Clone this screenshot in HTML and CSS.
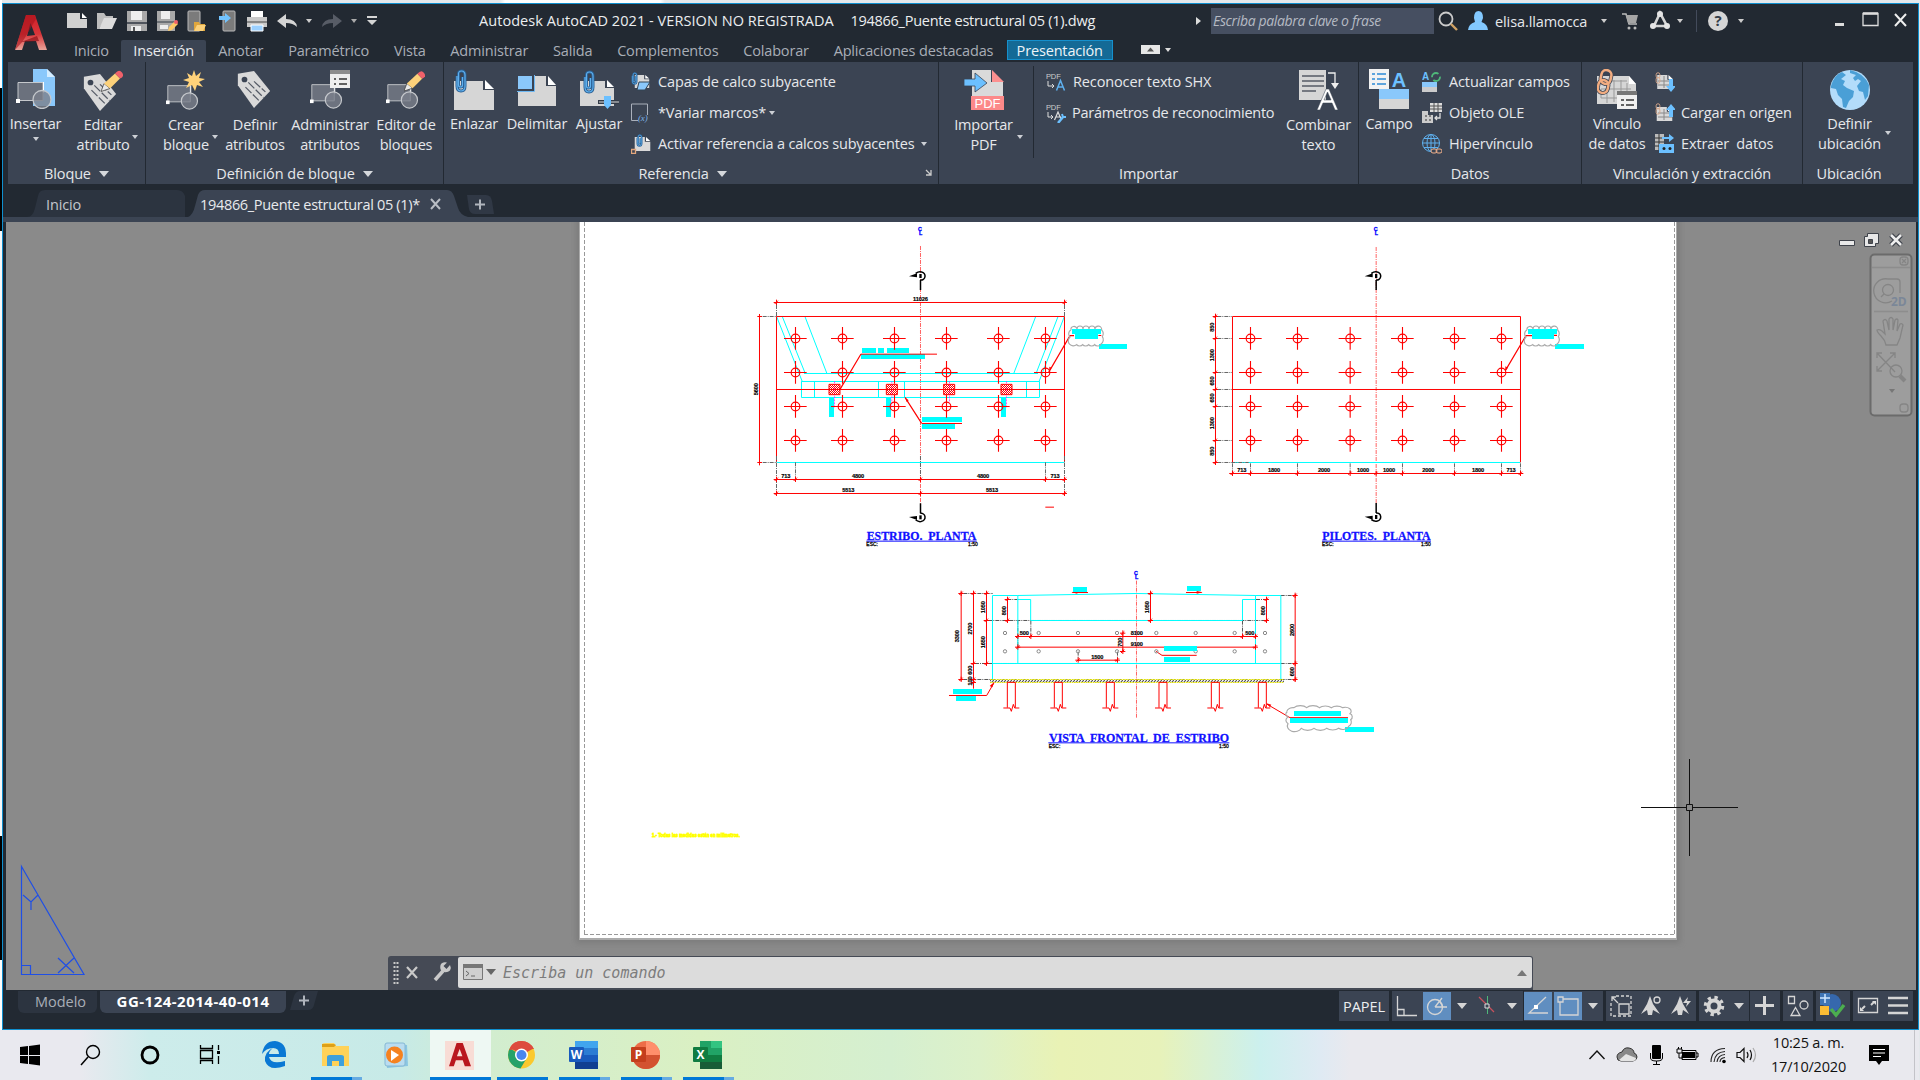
FILE: index.html
```html
<!DOCTYPE html>
<html lang="es">
<head>
<meta charset="utf-8">
<title>Autodesk AutoCAD 2021</title>
<link rel="stylesheet" href="styles.css">
</head>
<body>
<svg class="defs" width="0" height="0" aria-hidden="true">
  <defs>
    <linearGradient id="redA" x1="0" y1="0" x2="0" y2="1"><stop offset="0" stop-color="#d0202a"/><stop offset=".55" stop-color="#d8363a"/><stop offset="1" stop-color="#e9a49a"/></linearGradient>
    <symbol id="logoA" viewBox="0 0 32 36"><path d="M11 0h9l12 35h-8l-3-9H10l-3 9H0z" fill="url(#redA)"/><path d="M15.500 8l4.500 12-8 1z" fill="#222932"/><path d="M11 0h9l1 4L8 26 0 35z" fill="#a8141d" opacity=".6"/><path d="M6 27l16-6 2 5z" fill="#8e0f18" opacity=".7"/></symbol>
    <symbol id="blk" viewBox="0 0 40 40"><path d="M2 13.500h25v18H2z" fill="#6b717d" stroke="#c5c8cc"/><path d="M27.500 13v11" stroke="#fff"/><circle cx="26" cy="30.500" r="9" fill="#7b808b" fill-opacity=".8" stroke="#c5c8cc" stroke-width="1.300"/><path d="M0 30h4v4H0z" fill="#fff"/></symbol>
    <symbol id="tag" viewBox="0 0 40 40"><path d="M3 4L20 1l17 21-17 18L3 16z" fill="#d9d9d9"/><circle cx="10" cy="10" r="3" fill="#3b4453"/><path d="M11 18l14 14M14 13l16 16M20 12l12 11" stroke="#555b66" stroke-width="1.300" stroke-dasharray="9 2"/></symbol>
    <symbol id="pencil" viewBox="0 0 22 22"><path d="M0 21l3-8 6 5z" fill="#e9e9e9" stroke="#333" stroke-width=".7"/><path d="M3 13L14 3l5 5L9 18z" fill="#fcd17a"/><path d="M14 3q4-5 7-1t-2 6z" fill="#f0616a"/></symbol>
    <symbol id="clip" viewBox="0 0 12 24"><path d="M2 7v10q0 5 4 5t4-5V6q0-4-3.500-4T3.500 6v10q0 2 2 2t2-2V8" fill="none" stroke="#2a5f92" stroke-width="3"/><path d="M2 7v10q0 5 4 5t4-5V6q0-4-3.500-4T3.500 6v10q0 2 2 2t2-2V8" fill="none" stroke="#5fb0ee" stroke-width="1.200"/></symbol>
    <symbol id="sheet" viewBox="0 0 20 18"><path d="M0 0h13v6h7v12H0z" fill="#d9d9d9"/><path d="M14.500 0L20 5h-5.500z" fill="#fff"/></symbol>
    <symbol id="link" viewBox="0 0 7 16"><rect x="1" y="1" width="5" height="7" rx="2.500" fill="none" stroke="#d9a98b" stroke-width="1.200"/><rect x="1" y="7" width="5" height="8" rx="2.500" fill="none" stroke="#d9a98b" stroke-width="1.200"/></symbol>
    <g id="pile" stroke="#f00" stroke-width="3.300" fill="none"><path d="M-34 .5h68M.5-34v68"/><circle cx=".5" cy=".5" r="13"/></g>
    <g id="pilerow"><use href="#pile" y="355"/><use href="#pile" y="457"/><use href="#pile" y="559"/><use href="#pile" y="661"/></g>
    <g id="tick"><path d="M-8 .5h16M.5-8v16M-5 5l10-10" stroke="#f00" stroke-width="3"/></g>
    <g id="sectop"><path d="M-34 1l24-9v12z" fill="#000"/><path d="M-14-8Q-4-15 4-12A12 12 0 0 1 0 12" fill="none" stroke="#000" stroke-width="4.500"/><path d="M-3-6h7V6h-7z"/><path d="M.5 12v30" stroke="#000" stroke-width="4.500"/></g>
    <g id="cloud" fill="none" stroke="#aaa" stroke-width="3.500"><path d="M5 10a9 9 0 0 1 18-3a9 9 0 0 1 18 0a9 9 0 0 1 18 0a9 9 0 0 1 18 0a9 9 0 0 1 20 3a10 14 0 0 1 2 20a12 14 0 0 1-4 22a10 7 0 0 1-19 2a10 7 0 0 1-18 0a10 7 0 0 1-18 0a10 7 0 0 1-18 0a13 13 0 0 1-20-23a10 12 0 0 1 3-21"/></g>
    <g id="stub" fill="none" stroke="#f00" stroke-width="3"><path d="M-12 76V0h24v76M-24 77H-4l4 10L6 66l4 11h14"/></g>
    <g id="cline"><text y="-9">C</text><text x="2" y="3">L</text></g>
    <pattern id="hatch" width="6" height="6" patternUnits="userSpaceOnUse"><path d="M0 6L6 0" stroke="#f00" stroke-width="3"/></pattern>
    <pattern id="ground" width="9" height="9" patternUnits="userSpaceOnUse"><path d="M0 9L9 0" stroke="#555" stroke-width="3.500"/></pattern>
  </defs>
</svg>

<div class="screen">
<div class="window">
  <header class="titlebar">
    <svg class="logo" width="32" height="36"><use href="#logoA"/></svg>
    <div class="qat">
      <svg width="330" height="28" viewBox="62 7 330 28">
        <path d="M67 13h13v6h7v9H67z" fill="#d0d0d0"/><path d="M82 13l5 5h-5z" fill="#fff"/>
        <path d="M97 13h7l2 3h7v3h-8l-6 10h-2z" fill="#bdbdbd"/><path d="M104 18h13l-5 11H99z" fill="#dcdcdc"/>
        <path d="M127 11h20v20h-20z" fill="#a9a9a9"/><path d="M131 11h11v9h-11z" fill="#eee"/><path d="M127 23h20" stroke="#333a44" stroke-width="1.500"/><path d="M131 26h10v5h-10z" fill="#eee"/><path d="M134 27v4" stroke="#222" stroke-width="1.500"/>
        <path d="M157 11h18v20h-18z" fill="#a9a9a9"/><path d="M161 11h9v8h-9z" fill="#eee"/><path d="M157 22h18" stroke="#333a44"/><path d="M160 25h8v4h-8z" fill="#eee"/><path d="M168 31l1-4 6-6 3 3-6 6z" fill="#fcc967"/><circle cx="176" cy="22" r="2" fill="#f0616a"/>
        <rect x="188" y="11" width="12" height="20" rx="1" fill="#7b7b7b" stroke="#b9b9b9"/><path d="M194 22h5l1 2h5v7h-11z" fill="#e0a63c"/><path d="M197 25h9l-3 6h-9z" fill="#fcd17a"/>
        <rect x="223" y="11" width="12" height="20" rx="1" fill="#7b7b7b" stroke="#b9b9b9"/><path d="M219 16h6v-3l6 5-6 5v-3h-6z" fill="#72c3ff"/>
        <path d="M251 11h12v6h-12z" fill="#fff"/><path d="M247 17h20v10h-20z" fill="#c9c9c9"/><path d="M247 22h20" stroke="#444"/><path d="M251 25h12v6h-12z" fill="#9bd0ff" stroke="#fff"/>
        <path d="M277 21l9-7v5q10 0 11 8q-4-4-11-4v5z" fill="#d5d5d5"/><path d="M306 19h6l-3 4z" fill="#ccc"/>
        <path d="M342 21l-9-7v5q-10 0-11 8q4-4 11-4v5z" fill="#575c66"/><path d="M351 19h6l-3 4z" fill="#aaa"/>
        <path d="M367 16h10v2h-10zM367 20h10l-5 5z" fill="#d5d5d5"/>
      </svg>
    </div>
    <div class="title"><span class="t1">Autodesk AutoCAD 2021 - VERSION NO REGISTRADA</span><span class="t2">194866_Puente estructural 05 (1).dwg</span></div>
    <svg class="tri" width="5" height="8"><path d="M0 0l5 4-5 4z" fill="#ddd"/></svg>
    <div class="search">Escriba palabra clave o frase</div>
    <svg class="acct" width="56" height="28" viewBox="1436 7 56 28"><circle cx="1446" cy="19" r="6.500" fill="none" stroke="#ccc" stroke-width="1.800"/><path d="M1451 24l6 6" stroke="#d0a264" stroke-width="2.400"/><path d="M1474 18q0-7 4.500-7t4.500 7l-1.500 4q6 2 6.500 8h-20q.5-6 7-8z" fill="#83c9ff"/></svg>
    <div class="user">elisa.llamocca</div>
    <svg width="320" height="34" viewBox="1595 4 320 34">
      <path d="M1601 19h6l-3 4zM1677 19h6l-3 4zM1738 19h6l-3 4z" fill="#ccc"/>
      <path d="M1622 14h4l3 10h8" fill="none" stroke="#bbb" stroke-width="1.500"/><path d="M1626 15h12l-2 8h-8z" fill="#a5a5a5"/><circle cx="1629" cy="28" r="1.500" fill="#bbb"/><circle cx="1635" cy="28" r="1.500" fill="#bbb"/>
      <path d="M1660 13l-6 13h13z" fill="none" stroke="#d5d5d5" stroke-width="2.600"/><circle cx="1660" cy="14" r="3" fill="#e5e5e5"/><circle cx="1653" cy="26" r="3" fill="#e5e5e5"/><circle cx="1667" cy="26" r="3" fill="#e5e5e5"/>
      <path d="M1696.500 10v22" stroke="#434b5b"/>
      <circle cx="1718" cy="21" r="10" fill="#d5d5d5"/><text x="1718" y="26" text-anchor="middle" class="qm">?</text>
      <path d="M1835 23h9v3h-9z" fill="#ddd"/><path d="M1863 13.500h15v12h-15z" fill="none" stroke="#ddd" stroke-width="1.300"/><path d="M1863 13.500h15" stroke="#ddd" stroke-width="2.500"/><path d="M1895 14l11 12M1906 14l-11 12" stroke="#eee" stroke-width="2"/>
    </svg>
  </header>

  <nav class="tabs">
    <span class="tab">Inicio</span><span class="tab on">Inserción</span><span class="tab">Anotar</span><span class="tab">Paramétrico</span><span class="tab">Vista</span><span class="tab">Administrar</span><span class="tab">Salida</span><span class="tab">Complementos</span><span class="tab">Colaborar</span><span class="tab">Aplicaciones destacadas</span><span class="tab ctx">Presentación</span>
    <svg class="minrib" width="32" height="10"><path d="M0 0h19v9H0z" fill="#e6e6e6"/><path d="M6 6.500h7l-3.500-4z" fill="#555"/><path d="M24 3h6l-3 4z" fill="#ddd"/></svg>
  </nav>

  <div class="ribbon">
    <section class="panel p-bloque">
      <div class="tools">
        <div class="tool one"><svg width="40" height="42"><path d="M17 0h14l8 8v29H17z" fill="#8ac8fb"/><path d="M31 0l8 8h-8z" fill="#d5edff"/><use href="#blk" width="40" height="40"/></svg><b>Insertar</b><i class="ar"></i></div>
        <div class="tool"><svg width="42" height="42"><use href="#tag" x="-2" y="4" width="40" height="38"/><use href="#pencil" x="19" y="1" width="22" height="23"/></svg><b>Editar<br>atributo</b><i class="ar side"></i></div>
      </div>
      <h3>Bloque<i class="big"></i></h3>
    </section>
    <section class="panel p-def">
      <div class="tools">
        <div class="tool"><svg width="40" height="42"><use href="#blk" y="3" width="36" height="39"/><path d="M28 1l2 6 5-4-2 6 6 1-6 3 4 5-6-2-2 6-3-6-6 3 3-6-6-2 6-2-2-5 5 3z" fill="#ffd27a"/></svg><b>Crear<br>bloque</b><i class="ar side"></i></div>
        <div class="tool"><svg width="40" height="42"><use href="#tag" y="1" width="38" height="38"/></svg><b>Definir<br>atributos</b></div>
        <div class="tool"><svg width="40" height="42"><use href="#blk" width="36" y="3" height="37"/><path d="M20 1h20v18H20z" fill="#eee"/><path d="M20 1h20v4H20z" fill="#8d8d8d"/><path d="M24 10h2m3 0h8M24 15h2m3 0h8" stroke="#333" stroke-width="1.500"/></svg><b>Administrar<br>atributos</b></div>
        <div class="tool"><svg width="40" height="42"><use href="#blk" width="36" y="3" height="37"/><use href="#pencil" x="18" y="1" width="21" height="23"/></svg><b>Editor de<br>bloques</b></div>
      </div>
      <h3>Definición de bloque<i class="big"></i></h3>
    </section>
    <section class="panel p-ref">
      <div class="tools">
        <div class="tool one"><svg width="40" height="42"><path d="M0 12h29v9h11v20H0z" fill="#d6d6d6"/><path d="M31 11l9 9h-9z" fill="#fff"/><use href="#clip" x="1" y="0" width="12" height="24"/></svg><b>Enlazar</b></div>
        <div class="tool one"><svg width="40" height="42"><path d="M1 22h17V7h11v10h10v20H1z" fill="#d6d6d6"/><path d="M31 7l8 9h-8z" fill="#fff"/><path d="M1 7h14v13H1z" fill="#8ac8fb"/><path d="M17.500 6v16.500H0" fill="none" stroke="#6eb8f2"/></svg><b>Delimitar</b></div>
        <div class="tool one"><svg width="40" height="42"><path d="M1 12h25v7h9v18H1z" fill="#d6d6d6"/><path d="M28 11l7 7h-7z" fill="#fff"/><use href="#clip" x="4" y="1" width="12" height="24"/><path d="M19 31h21v4H19z" fill="#333b47"/><path d="M20 33h20" stroke="#ddd"/><path d="M25 27h7v9l-3.500 4-3.500-4z" fill="#6cc0ff"/></svg><b>Ajustar</b></div>
        <ul class="list">
          <li><svg width="20" height="20"><use href="#sheet" x="3" y="3" width="16" height="13"/><use href="#clip" width="7" height="13"/><path d="M8 10h11l-5 8H6z" fill="#8ac8fb" stroke="#345"/></svg><span>Capas de calco subyacente</span></li>
          <li><svg width="20" height="20"><path d="M7 17.500H.5V1h16v11" fill="none" stroke="#aab0bb"/><text x="7" y="18" class="ix">(x)</text></svg><span>*Variar marcos*</span><i class="ar"></i></li>
          <li><svg width="20" height="20"><use href="#sheet" x="3" y="3" width="17" height="14"/><use href="#clip" x="5" width="7" height="13"/><path d="M.5 15.500h4v4h-4z" fill="#3b4453" stroke="#e2a67c" stroke-width="1.300"/></svg><span>Activar referencia a calcos subyacentes</span><i class="ar far"></i></li>
        </ul>
      </div>
      <h3>Referencia<i class="big"></i></h3>
      <svg class="launch" width="7" height="7"><path d="M1 1l5 5M6 1v5H1" fill="none" stroke="#ccc" stroke-width="1.300"/></svg>
    </section>
    <section class="panel p-imp">
      <div class="tools">
        <div class="tool"><svg width="40" height="42"><path d="M8 1h19v12h12v28H8z" fill="#dadada"/><path d="M28 1l12 12H28z" fill="#fc9090"/><path d="M7 27h33v14H7z" fill="#fc8989"/><text x="23.500" y="38.500" text-anchor="middle" class="pdf">PDF</text><path d="M0 10h11V4l12 10-12 9v-6H0z" fill="#6cc0ff" stroke="#3b4453" stroke-width=".8"/></svg><b>Importar<br>PDF</b><i class="ar side"></i></div>
        <i class="vsep"></i>
        <ul class="list">
          <li><svg width="20" height="20"><text x="0" y="7" class="mini">PDF</text><path d="M2 9v5h6M6 12l2 2-2 2" fill="none" stroke="#ddd"/><path d="M10.500 18.500l4-10 4 10M12 15h5" fill="none" stroke="#5fb0ee" stroke-width="1.500"/></svg><span>Reconocer texto SHX</span></li>
          <li><svg width="20" height="20"><text x="0" y="7" class="mini">PDF</text><path d="M2 9v5h5M5 12l2 2-2 2" fill="none" stroke="#ddd"/><path d="M8.500 17l3.500-8 3 7M10 14h5" fill="none" stroke="#ddd" stroke-width="1.200"/><path d="M12 20l5-6" stroke="#6cc0ff" stroke-width="2.500"/><path d="M16 11l1 3h3" fill="none" stroke="#6cc0ff" stroke-width="2"/></svg><span class="param">Parámetros de reconocimiento</span></li>
        </ul>
        <div class="tool"><svg width="40" height="42"><path d="M0 1h27v30H0z" fill="#d6d6d6"/><path d="M3 7h22M3 12h22M3 17h22M3 22h14" stroke="#555b66" stroke-width="1.300"/><path d="M29 4h7v13" fill="none" stroke="#eee" stroke-width="1.300"/><path d="M32 14h8l-4 6z" fill="#eee"/><path d="M18 41l9-21h3l9 21h-3l-3-7H24l-3 7zM25 31h7l-3.500-8z" fill="#fff" stroke="#3b4453" stroke-width=".5"/></svg><b>Combinar<br>texto</b></div>
      </div>
      <h3>Importar</h3>
    </section>
    <section class="panel p-datos">
      <div class="tools">
        <div class="tool one"><svg width="40" height="42"><path d="M10 20h30v10H10z" fill="#8ac8fb"/><path d="M10 30h30v10H10z" fill="#d6d6d6"/><path d="M0 0h20v20H0z" fill="#f2f2f2"/><path d="M3 5h3m2 0h9M3 10h3m2 0h9M3 15h3m2 0h9" stroke="#2c8ad6" stroke-width="1.500"/><text x="30" y="18" text-anchor="middle" class="bigA">A</text></svg><b>Campo</b></div>
        <ul class="list">
          <li><svg width="20" height="20"><path d="M0 10h15v5H0z" fill="#8ac8fb"/><path d="M0 15h15v5H0z" fill="#ccc"/><text x="0" y="8" class="smA">A</text><circle cx="14" cy="5" r="4" fill="none" stroke="#4fb87a" stroke-width="1.800" stroke-dasharray="9 3"/></svg><span>Actualizar campos</span></li>
          <li><svg width="20" height="20"><path d="M8 0h12v9H8z" fill="#ddd"/><path d="M8 3h12M8 6h12M12 0v9M16 0v9" stroke="#555"/><path d="M0 8h6v4h5v8H0z" fill="#ccc"/><path d="M3 13h2m2 0h2M3 17h2m2 0h2" stroke="#333"/><path d="M18 10v5h-5M15 13l-2 2 2 2" fill="none" stroke="#ddd" stroke-width="1.300"/></svg><span>Objeto OLE</span></li>
          <li><svg width="20" height="20"><g fill="none" stroke="#5fb0ee"><circle cx="9" cy="9" r="8.500"/><ellipse cx="9" cy="9" rx="4" ry="8.500"/><path d="M9 0v18M0 9h18M2 4.500h14M2 13.500h14"/></g><rect x="9" y="15" width="6" height="4" rx="2" fill="#3b4453" stroke="#f0b08a"/><rect x="14" y="15" width="6" height="4" rx="2" fill="none" stroke="#f0b08a"/></svg><span>Hipervínculo</span></li>
        </ul>
      </div>
      <h3>Datos</h3>
    </section>
    <section class="panel p-vin">
      <div class="tools">
        <div class="tool one"><svg width="40" height="42"><path d="M0 7h32l7 8v20H0z" fill="#d6d6d6"/><path d="M32 7l7 8h-7z" fill="#fff"/><path d="M4 29V20h30M4 29h20M10 14v20M17 11v22M24 11v12M30 14v8M10 12h20" stroke="#999" fill="none"/><path d="M20 22h20v18H20z" fill="#f0f0f0"/><path d="M20 22h20v4H20z" fill="#777"/><path d="M24 31h3m2 0h8M24 36h3m2 0h8" stroke="#333" stroke-width="1.500"/><g fill="none" stroke="#3b4453" stroke-width="4"><rect x="4" y="1" width="10" height="14" rx="5" transform="rotate(12 9 8)"/><rect x="1" y="11" width="10" height="13" rx="5" transform="rotate(12 6 18)"/></g><g fill="none" stroke="#f2ac80" stroke-width="2.500"><rect x="4" y="1" width="10" height="14" rx="5" transform="rotate(12 9 8)"/><rect x="1" y="11" width="10" height="13" rx="5" transform="rotate(12 6 18)"/></g></svg><b>Vínculo<br>de datos</b></div>
        <ul class="list">
          <li><svg width="20" height="20"><use href="#sheet" x="1" y="3" width="18" height="14"/><path d="M3 9h14M3 13h14M9 4v12" stroke="#888"/><use href="#link" width="6" height="12"/><path d="M14 7h4v7h3l-5 6-5-6h3z" fill="#6cc0ff"/></svg><span></span></li>
          <li><svg width="20" height="20"><use href="#sheet" x="0" y="4" width="19" height="14"/><path d="M3 10h14M3 14h14M9 6v11" stroke="#888"/><use href="#link" width="6" height="12"/><path d="M14 14h4V7h3l-5-6-5 6h3z" fill="#6cc0ff"/></svg><span>Cargar en origen</span></li>
          <li><svg width="20" height="20"><path d="M0 0h9v16H0z" fill="#bbb"/><path d="M0 4h9M0 8h9M0 12h9M4 0v16" stroke="#333"/><path d="M7 3h7V0l5 4-5 4V5H7z" fill="#6cc0ff"/><path d="M4 10h15v9H4z" fill="#6cc0ff"/><circle cx="9" cy="14.500" r="1.500" fill="#222"/><circle cx="15" cy="14.500" r="1.500" fill="#222"/></svg><span>Extraer&nbsp; datos</span></li>
        </ul>
      </div>
      <h3>Vinculación y extracción</h3>
    </section>
    <section class="panel p-ubi">
      <div class="tools">
        <div class="tool one"><svg width="40" height="42"><circle cx="20" cy="21" r="20" fill="#b3dcfa"/><path d="M1 17Q4 6 12 3l4 3-5 4 4 2-2 4 4 3 7 3-1 6-4 4-3 7-3-1-1-8-4-4-2-6-5-1z" fill="#4a9fd6"/><path d="M20 1q14 3 19 15l-1 11-3 4-2-8-4-1-2-5 4-5-3-2-3 2-2-3 3-3-6-2z" fill="#4a9fd6"/></svg><b>Definir<br>ubicación</b><i class="ar side"></i></div>
      </div>
      <h3>Ubicación</h3>
    </section>
  </div>

  <div class="files">
    <div class="ftab"><svg width="160" height="27"><path d="M0 27Q6 27 8 18L11 6Q12 0 18 0H150Q156 0 158 6V27z" fill="#2c3440"/></svg><span>Inicio</span></div>
    <div class="ftab cur"><svg width="272" height="27"><path d="M0 27Q5 25 7 16L10 5Q12 0 17 0H259Q264 0 266 6L270 18Q272 25 280 27z" fill="#3b4453"/></svg><span>194866_Puente estructural 05 (1)*</span><svg class="x" width="12" height="12"><path d="M1 1l9 10M10 1L1 11" stroke="#b9bdc4" stroke-width="2"/></svg></div>
    <svg class="plus" width="27" height="19"><path d="M0 0h19q5 0 6 6l2 13H8q-5 0-6-5z" fill="#303845"/><path d="M8 9.500h10M13 4.500v10" stroke="#b0b5bd" stroke-width="2"/></svg>
  </div>

  <main class="canvas">
    <svg width="1909" height="768" viewBox="6 222 1909 768">
      <defs><filter id="sh" x="-5%" y="-5%" width="110%" height="110%"><feGaussianBlur stdDeviation="3"/></filter></defs>
      <path d="M576 200h1104v743H576z" fill="#707070" opacity=".55" filter="url(#sh)"/>
      <path d="M579 200h1098v740H579z" fill="#aaa"/><path d="M580 200h1096v738H580z" fill="#fff"/>
      <path d="M584.500 222v713M1674.500 222v713" stroke="#999" stroke-dasharray="4 2"/><path d="M584 934.500h1090" stroke="#999" stroke-dasharray="4 2"/>
      <text x="652" y="837" class="note" textLength="88" lengthAdjust="spacingAndGlyphs">1.- Todas las medidas están en milímetros.</text>

      <g transform="translate(740 220) scale(.33333)">
        <path d="M541.500 78V852" stroke="#f44" stroke-width="2.500" stroke-dasharray="12 3 3 3"/>
        <g fill="none" stroke="#0ff" stroke-width="3">
          <path d="M110 290L187 485M127 290l69 171M195 290l66 171M973 290L897 485M954 290l-66 171M887 290l-66 171"/>
          <path d="M192 460.500h702M184 484.500h714M184 532.500h714M184.500 484v48M223.500 484v48M415.500 484v48M493.500 484v48M859.500 484v48M898.500 484v48M110 727.500h863"/>
        </g>
        <g fill="#0ff"><path d="M366 384h42v15h-42zM414 384h18v15h-18zM441 384h66v15h-66zM363 402h192v15H363zM267 531h15v60h-15zM438 531h15v60h-15zM783 531h15v60h-15zM546 591h120v15H546zM546 612h99v15h-99zM996 327h87v15h-87zM1005 342h69v15h-69zM1077 372h84v15h-84z"/></g>
        <path d="M283.500 484v78M455.500 484v78M628.500 484v60M799.500 484v78" stroke="#f0f" stroke-width="2" stroke-dasharray="6 3"/>
        <g fill="none" stroke="#f00" stroke-width="3">
          <path d="M109.500 727V289.500H973.500V727M110 508.500h863M58.500 282v454M52 289.500h14M52 727.500h14M110 247.500h863M110 778.500h863M110 820.500h863M363 402.500h228M546 610.500h120M1075 346.500h9M916 861.500h26"/>
          <path d="M300 508L363 402M495 532l50 78M926 457l64-110h12" stroke-width="3.500"/>
        </g>
        <path d="M496 533l10 8-6 5zM928 452l0-12 7 3z" fill="#f00"/>
        <g fill="url(#hatch)" stroke="#f00" stroke-width="3"><path d="M267 493h33v31h-33zM439 493h33v31h-33zM611 493h33v31h-33zM783 493h33v31h-33z"/></g>
        <g stroke="#666" stroke-width="3" stroke-dasharray="12 3 3 3"><path d="M109.500 255v35M973.500 255v35M68 289.500h42M68 727.500h42M109.500 708v106M973.500 708v106M166.500 727v44M916.500 727v44M541.500 708v64"/></g>
        <use href="#pilerow" x="166"/><use href="#pilerow" x="307"/><use href="#pilerow" x="463"/><use href="#pilerow" x="619"/><use href="#pilerow" x="775"/><use href="#pilerow" x="916"/>
        <use href="#tick" x="109" y="247"/><use href="#tick" x="973" y="247"/><use href="#tick" x="109" y="778"/><use href="#tick" x="166" y="778"/><use href="#tick" x="541" y="778"/><use href="#tick" x="916" y="778"/><use href="#tick" x="973" y="778"/><use href="#tick" x="109" y="820"/><use href="#tick" x="541" y="820"/><use href="#tick" x="973" y="820"/>
        <use href="#sectop" x="541" y="168"/><use href="#sectop" transform="translate(541 892) scale(1 -1)"/>
        <use href="#cloud" x="988" y="320"/>
        <g class="dim"><text x="541" y="244">11026</text><text x="137" y="774">713</text><text x="354" y="774">4800</text><text x="729" y="774">4800</text><text x="945" y="774">713</text><text x="325" y="817">5513</text><text x="756" y="817">5513</text><text transform="translate(54 508) rotate(-90)">5600</text></g>
        <use href="#cline" x="540" y="42" class="cl"/>
        <text x="380" y="960" class="cap" textLength="329" lengthAdjust="spacingAndGlyphs">ESTRIBO.  PLANTA</text><path d="M379 963.500h331" stroke="#11f" stroke-width="3"/>
        <text x="379" y="977" class="esc">ESC:</text><text x="684" y="977" class="esc">1:50</text>
      </g>

      <g transform="translate(1190 220) scale(.33333)">
        <path d="M558.500 81V852" stroke="#f44" stroke-width="2.500" stroke-dasharray="12 3 3 3"/>
        <path d="M127 727.500h864" stroke="#0ff" stroke-width="3"/>
        <g fill="none" stroke="#f00" stroke-width="3"><path d="M127.500 727V289.500H991.500V727M127 508.500h864M76.500 282v452M118 760.500h882"/><path d="M946 452l62-105h18M1092 346h9" stroke-width="3.500"/></g><path d="M946 452v-13l8 4z" fill="#f00"/>
        <g fill="#0ff"><path d="M1014 327h87v15h-87zM1026 342h66v15h-66zM1095 372h87v15h-87z"/></g>
        <g stroke="#666" stroke-width="3" stroke-dasharray="12 3 3 3"><path d="M82 289.500h44M82 355.500h44M82 457.500h44M82 508.500h44M82 559.500h44M82 661.500h44M82 727.500h94M127.500 730v28M181.500 730v28M322.500 730v28M480.500 730v28M637.500 730v28M793.500 730v28M934.500 730v28M991.500 730v28"/></g>
        <use href="#pilerow" x="181"/><use href="#pilerow" x="322"/><use href="#pilerow" x="480"/><use href="#pilerow" x="637"/><use href="#pilerow" x="793"/><use href="#pilerow" x="934"/>
        <use href="#tick" x="76" y="289"/><use href="#tick" x="76" y="355"/><use href="#tick" x="76" y="457"/><use href="#tick" x="76" y="508"/><use href="#tick" x="76" y="559"/><use href="#tick" x="76" y="661"/><use href="#tick" x="76" y="727"/>
        <use href="#tick" x="127" y="760"/><use href="#tick" x="181" y="760"/><use href="#tick" x="322" y="760"/><use href="#tick" x="480" y="760"/><use href="#tick" x="558" y="760"/><use href="#tick" x="637" y="760"/><use href="#tick" x="793" y="760"/><use href="#tick" x="934" y="760"/><use href="#tick" x="991" y="760"/>
        <use href="#sectop" x="558" y="168"/><use href="#sectop" transform="translate(558 891) scale(1 -1)"/>
        <use href="#cloud" x="1006" y="320"/>
        <g class="dim"><text x="155" y="756">713</text><text x="252" y="756">1800</text><text x="402" y="756">2000</text><text x="519" y="756">1000</text><text x="597" y="756">1000</text><text x="715" y="756">2000</text><text x="864" y="756">1800</text><text x="963" y="756">713</text>
        <text transform="translate(72 322) rotate(-90)">850</text><text transform="translate(72 406) rotate(-90)">1300</text><text transform="translate(72 483) rotate(-90)">650</text><text transform="translate(72 534) rotate(-90)">650</text><text transform="translate(72 610) rotate(-90)">1300</text><text transform="translate(72 694) rotate(-90)">850</text></g>
        <use href="#cline" x="557" y="42" class="cl"/>
        <text x="397" y="960" class="cap" textLength="325" lengthAdjust="spacingAndGlyphs">PILOTES.  PLANTA</text><path d="M396 963.500h327" stroke="#11f" stroke-width="3"/>
        <text x="396" y="977" class="esc">ESC:</text><text x="693" y="977" class="esc">1:50</text>
      </g>

      <g transform="translate(940 560) scale(.33333)">
        <path d="M589.500 62V474" stroke="#f44" stroke-width="2.500" stroke-dasharray="12 3 3 3"/>
        <g fill="none" stroke="#555" stroke-width="3" stroke-dasharray="12 3 3 3"><path d="M70 100.500h88M145 181.500h835M105 310.500h128M70 358.500h88M233.500 182v80M272.500 182v45M907.500 182v45M946.500 182v80M202 118.500h30M948 118.500h32M1022 106.500h40M1022 310.500h40M1022 358.500h40M414.500 275v22M532.500 275v22"/></g>
        <g fill="none" stroke="#0ff" stroke-width="3"><path d="M157.500 358V106.500H233L589 100.500 946 106.500h76.500V358M233.500 106V310.500H946.500V106M232 118.500h40V181.500H907.500V118.500h39M157 310.500h865"/></g>
        <path d="M150 358h882v9H150z" fill="url(#ground)"/><path d="M150 358.500h882M150 367.500h882" stroke="#e6e600" stroke-width="3" stroke-dasharray="5 2"/>
        <g fill="none" stroke="#f00" stroke-width="3"><path d="M63.500 96v266M100.500 96v290M139.500 96v218M202.500 114v70M631.500 96v90M979.500 114v70M1065.500 102v262M233 229.500h714M233 261.500h714M414 300.500h118M548.500 219v56M397 97.500h47M738 97.500h47M27 406.500h113l22-38M980 432l70 41h174M648 274l18 12h104"/></g>
        <path d="M394 97l18-4v8zM788 97l-18-4v8zM163 366l-14 12 8 4zM980 430l14 4-5 7z" fill="#f00"/>
        <use href="#tick" x="63" y="100"/><use href="#tick" x="100" y="100"/><use href="#tick" x="139" y="100"/><use href="#tick" x="139" y="181"/><use href="#tick" x="139" y="310"/><use href="#tick" x="100" y="310"/><use href="#tick" x="63" y="358"/><use href="#tick" x="100" y="358"/><use href="#tick" x="100" y="367"/><use href="#tick" x="202" y="118"/><use href="#tick" x="202" y="181"/><use href="#tick" x="631" y="100"/><use href="#tick" x="631" y="181"/><use href="#tick" x="979" y="118"/><use href="#tick" x="979" y="181"/><use href="#tick" x="1065" y="106"/><use href="#tick" x="1065" y="310"/><use href="#tick" x="1065" y="358"/><use href="#tick" x="233" y="229"/><use href="#tick" x="272" y="229"/><use href="#tick" x="907" y="229"/><use href="#tick" x="946" y="229"/><use href="#tick" x="233" y="261"/><use href="#tick" x="946" y="261"/><use href="#tick" x="414" y="300"/><use href="#tick" x="532" y="300"/><use href="#tick" x="548" y="219"/><use href="#tick" x="548" y="274"/>
        <g fill="none" stroke="#888" stroke-width="3"><circle cx="195" cy="219" r="5"/><circle cx="296" cy="219" r="5"/><circle cx="414" cy="219" r="5"/><circle cx="531" cy="219" r="5"/><circle cx="649" cy="219" r="5"/><circle cx="767" cy="219" r="5"/><circle cx="884" cy="219" r="5"/><circle cx="975" cy="219" r="5"/><circle cx="195" cy="274" r="5"/><circle cx="296" cy="274" r="5"/><circle cx="414" cy="274" r="5"/><circle cx="531" cy="274" r="5"/><circle cx="649" cy="274" r="5"/><circle cx="767" cy="274" r="5"/><circle cx="884" cy="274" r="5"/><circle cx="975" cy="274" r="5"/></g>
        <use href="#stub" x="214" y="367"/><use href="#stub" x="355" y="367"/><use href="#stub" x="511" y="367"/><use href="#stub" x="669" y="367"/><use href="#stub" x="826" y="367"/><use href="#stub" x="967" y="367"/>
        <g fill="#0ff"><path d="M399 81h42v15h-42zM741 78h42v15h-42zM672 258h99v15h-99zM672 291h78v15h-78zM39 387h87v15H39zM48 408h60v15H48zM1062 453h141v15h-141zM1050 474h174v15h-174zM1215 501h87v15h-87z"/></g>
        <path d="M1040 455a20 16 0 0 1 22-12a22 12 0 0 1 38 0a22 12 0 0 1 38 0a22 12 0 0 1 36 0a22 12 0 0 1 34 0a18 12 0 0 1 22 18a10 10 0 0 1 2 18a14 14 0 0 1-6 20a18 12 0 0 1-30 6a22 12 0 0 1-36 0a22 12 0 0 1-38 0a22 12 0 0 1-38 0a18 14 0 0 1-40-14a14 12 0 0 1 0-20a14 10 0 0 1-2-16" fill="none" stroke="#aaa" stroke-width="3.500"/>
        <g class="dim"><text x="253" y="226">500</text><text x="590" y="226">8100</text><text x="929" y="226">500</text><text x="590" y="257">9100</text><text x="472" y="296">1500</text>
        <text transform="translate(58 229) rotate(-90)">3300</text><text transform="translate(97 206) rotate(-90)">2700</text><text transform="translate(136 142) rotate(-90)">1050</text><text transform="translate(136 247) rotate(-90)">1650</text><text transform="translate(97 331) rotate(-90)">600</text><text transform="translate(97 363) rotate(-90)">100</text><text transform="translate(199 152) rotate(-90)">800</text><text transform="translate(627 142) rotate(-90)">1050</text><text transform="translate(976 152) rotate(-90)">800</text><text transform="translate(1061 210) rotate(-90)">2600</text><text transform="translate(1061 335) rotate(-90)">600</text><text transform="translate(545 247) rotate(-90)">700</text></g>
        <use href="#cline" x="588" y="54" class="cl"/>
        <text x="327" y="545" class="cap" textLength="540" lengthAdjust="spacingAndGlyphs">VISTA  FRONTAL  DE  ESTRIBO</text><path d="M325 548.500h543" stroke="#11f" stroke-width="3"/>
        <text x="326" y="563" class="esc">ESC:</text><text x="837" y="563" class="esc">1:50</text>
      </g>

      <path d="M21.500 866.500L84 974.500H21.500zM21.500 965.500h9v9M23 895l8 7 7-7M31 902v8M58 958l16 15M74 958l-16 15" fill="none" stroke="#1f4fe6" stroke-width="1.200"/>
      <path d="M1641 807.500h45M1692 807.500h46M1689.500 759v45M1689.500 811v45M1686.500 804.500h6v6h-6z" fill="none" stroke="#111"/>

      <g stroke="#3f434b" fill="#e8e8e8"><path d="M1839.500 240.500h15v5h-15z"/><path d="M1867.500 233.500h11v10h-3v3h-11v-10h3z"/><path d="M1868.500 239.500h4v4h-4z" fill="#555"/></g>
      <path d="M1891 235l10 10M1901 235l-10 10" stroke="#3f434b" stroke-width="5"/><path d="M1891 235l10 10M1901 235l-10 10" stroke="#eee" stroke-width="2.500"/>
      <rect x="1870.500" y="254.500" width="41" height="161" rx="4" fill="#9d9d9d" stroke="#6b6b6b" stroke-width="2"/>
      <g fill="none" stroke="#858585" stroke-width="1.300"><path d="M1872 267.500h38M1874 311.500h34" stroke="#8d8d8d"/><rect x="1900" y="257" width="8" height="8" rx="3"/><path d="M1902 259l4 4M1906 259l-4 4"/><path d="M1888 279h9q3 0 3 3v11M1888 279a12 12 0 1 0 4 22"/><circle cx="1888" cy="290" r="5.500"/><path d="M1881 297l3-3"/>
      <path d="M1886 345q-1-5-5-9t-4-6q2-1 5 1l3 3-2-13q2-3 4 0l2 9 0-11q2-3 4 0l0 11 2-10q2-2 3 0l-1 11 3-7q2-1 3 1l-3 13-3 7z"/>
      <path d="M1877 353l18 19M1895 353l-18 18M1877 358v-5h5M1890 353h5v5M1877 366v5h5"/><circle cx="1896" cy="371" r="6"/><path d="M1900 376l5 5" stroke-width="4"/><rect x="1900" y="404" width="8" height="8" rx="3"/></g><path d="M1889 389h6l-3 4z" fill="#777"/><text x="1891" y="306" class="twod">2D</text>
    </svg>
    <div class="cmd">
      <svg width="70" height="33" viewBox="388 956 70 33"><path d="M394.500 962v22M397.500 962v22" stroke="#c9c9c9" stroke-width="2" stroke-dasharray="2 2"/><path d="M407 967l10 11M417 967l-10 11" stroke="#c9c9c9" stroke-width="2.200"/><path d="M435 980l8-9" stroke="#c9c9c9" stroke-width="3.500"/><path d="M450 965l-3.500 4-3-3 3.500-3.500q-5-1-6.500 2.500-1 4 1.500 6.500 5 2 8-1 1.500-3 0-5.500z" fill="#c9c9c9"/></svg>
      <div class="entry"><svg width="34" height="18"><path d="M.5.5h19v15H.5z" fill="#cfcfcf" stroke="#777"/><path d="M0 0h20v4H0z" fill="#777"/><path d="M3 7l3 2.500L3 12M8 12h4" fill="none" stroke="#666"/><path d="M23 5h10l-5 6z" fill="#666"/></svg><span>Escriba un comando</span><svg class="up" width="10" height="6"><path d="M0 6h10L5 0z" fill="#777"/></svg></div>
    </div>
  </main>

  <footer class="status">
    <div class="layouts"><span class="lt">Modelo</span><span class="lt cur">GG-124-2014-40-014</span><svg width="28" height="20"><path d="M0 19L4 5q2-5 6-5h18l-4 14q-1 5-6 5z" fill="#2c3440"/><path d="M9 9.500h10M14 4.500v10" stroke="#b0b5bd" stroke-width="2"/></svg></div>
    <svg class="sbar" width="576" height="32" viewBox="1338 992 576 32">
      <path d="M1339 992h50v30h-50zM1392 992h131v30h-131zM1524 992h79v30h-79zM1606 992h90v30h-90zM1699 992h50v30h-50zM1750 992h30v30h-30zM1783 992h30v30h-30zM1816 992h34v30h-34zM1853 992h60v30h-60z" fill="#3b4453"/>
      <path d="M1423 993h28v28h-28zM1524 993h28v28h-28zM1554 993h28v28h-28z" fill="#608ec0"/>
      <text x="1343" y="1013" class="papel" textLength="42">PAPEL</text>
      <g fill="none" stroke="#d5d5d5" stroke-width="1.300"><path d="M1397.500 997v19.500H1417M1398 1010.500h6v6"/>
      <circle cx="1435" cy="1008" r="7.500"/><path d="M1435 1008h12M1435 1008l7-9M1440 1003l3 5"/>
      <path d="M1548 1014h-19l17-16"/><path d="M1560 1000h18v16h-18z"/><path d="M1558 998h5v5h-5z" fill="#608ec0"/></g>
      <path d="M1534 1006h4v4h-4z" fill="#fff"/>
      <path d="M1479 998l15 15" stroke="#c8505c" stroke-width="1.300"/><path d="M1487.500 997v18" stroke="#4fb87a"/><path d="M1485 1005h4v4h-4z" fill="#3b4453" stroke="#ddd"/>
      <path d="M1457 1004h10l-5 6zM1507 1004h10l-5 6zM1588 1004h10l-5 6zM1734 1004h10l-5 6z" fill="#d5d5d5"/>
      <g fill="none" stroke="#d5d5d5" stroke-width="1.300"><path d="M1616 997h15v20h-20v-14" stroke-dasharray="3 2"/><path d="M1619 1005h10v10h-10z"/><path d="M1612 998l6 6M1612 1002v-4h4"/>
      <circle cx="1657" cy="1001" r="3"/><path d="M1788.500 997.500h6v7h-6zM1800 1016.500h-9l4.500-8z"/><circle cx="1804" cy="1006" r="4"/><path d="M1858.500 999.500h19v14h-19z"/><path d="M1862 1010l3-3M1874 1003l-3 3" stroke-width="2"/></g>
      <path d="M1650 997l3 8 7 10-7-4-1 5-4 0-1-5-6 4 6-10zM1680 997l3 8 6 10-6-4-1 5-4 0-1-5-6 4 6-10z" fill="#d5d5d5"/><path d="M1688 998l-5 6h4l-1 4 5-6h-4z" fill="#d5d5d5"/>
      <path d="M1872 1002h4v4zM1860 1008v4h4z" fill="#ddd"/>
      <circle cx="1714" cy="1007" r="5.500" fill="none" stroke="#d5d5d5" stroke-width="4"/><circle cx="1714" cy="1007" r="8.500" fill="none" stroke="#d5d5d5" stroke-width="3.500" stroke-dasharray="3.300 3.400"/>
      <path d="M1755 1006.500h19M1764.500 997v19" stroke="#d5d5d5" stroke-width="3"/>
      <circle cx="1832" cy="1004" r="9" fill="#3668ad"/><path d="M1820 994h10v12h-10z" fill="#3f75b5"/><path d="M1825 995v9M1820 999h10" stroke="#cfe6ff" stroke-width="1.500"/><path d="M1820 1007h9v9h-9z" fill="#fbbc34"/><path d="M1831 1010l5 6 8-10" fill="none" stroke="#4cae4f" stroke-width="3.500"/>
      <path d="M1888 999h20M1888 1006.500h20M1888 1014h20" stroke="#d5d5d5" stroke-width="2.300"/>
    </svg>
  </footer>
</div>

<div class="taskbar">
  <svg class="apps" width="740" height="50" viewBox="0 1030 740 50">
    <path d="M20 1047l8-1v9h-8zM29 1046l11-1.500v10.500h-11zM20 1056h8v8l-8-1zM29 1056h11v9.500l-11-1.500z" fill="#000"/>
    <circle cx="93" cy="1052" r="6.500" fill="none" stroke="#000" stroke-width="1.400"/><path d="M88 1057l-7 8" stroke="#000" stroke-width="1.500"/>
    <circle cx="150" cy="1055" r="8" fill="none" stroke="#000" stroke-width="2.800"/>
    <path d="M200.500 1045v3.500h12V1045M200.500 1064v-3.500h12v3.500M200.500 1050.500h12v8h-12zM218.500 1045v5M218.500 1056v8" fill="none" stroke="#000" stroke-width="1.300"/><path d="M217 1051h3v3h-3z"/>
    <path d="M262 1054q2-13 13-13 12 1 11 16h-17q2 8 16 4v5q-16 6-20-5-1-9 8-13-4 3-4 6h10q0-6-6-6-7 0-11 6z" fill="#0a78d4"/>
    <path d="M322 1045q0-2 3-2h9l2 3h13v20h-27z" fill="#ffd258"/><path d="M322 1047v-3h12l2 1-2 2z" fill="#dda018"/><path d="M327 1066v-9q0-2 3-2h11q3 0 3 2v9h-5v-5h-7v5z" fill="#3ea0dc"/>
    <path d="M386 1044l21 1 1 21-21 2z" fill="#8cc6e2"/><rect x="385" y="1043" width="20" height="23" rx="2" fill="#b9dcf0" stroke="#85b8d4"/><circle cx="394.500" cy="1055" r="8.500" fill="#f58220"/><path d="M391 1050l8 5-8 6z" fill="#fff"/>
    <path d="M430 1030h61v50h-61z" fill="#eef8f3"/><path d="M445 1041h29v29h-29z" fill="#f8dcd5"/><svg x="449" y="1043" width="22" height="24" viewBox="0 0 32 36" preserveAspectRatio="none"><path d="M11 0h9l12 35h-9l-3-9H10l-3 9H0z" fill="#b9161e"/><path d="M15.500 9l4 11h-8z" fill="#f8dcd5"/></svg>
    <circle cx="521.500" cy="1055" r="13.500" fill="#fbc92d"/><path d="M521.500 1055L510 1047.500a13.500 13.500 0 0 1 23.500 1z" fill="#dd4b3e"/><path d="M509.800 1048.200a13.500 13.500 0 0 0 10.700 20.200l6-10z" fill="#26a269"/><path d="M509 1050q4-9 12.500-9 8 0 12.500 8h-13z" fill="#dd4b3e"/><circle cx="521.500" cy="1055" r="6.500" fill="#fff"/><circle cx="521.500" cy="1055" r="5" fill="#4a85ee"/>
    <path d="M575 1041h23v7h-23z" fill="#41a5ee"/><path d="M575 1048h23v7h-23z" fill="#2b7cd3"/><path d="M575 1055h23v7h-23z" fill="#185abd"/><path d="M575 1062h23v7h-23z" fill="#103f91"/><rect x="569" y="1047" width="15" height="15" rx="1" fill="#185abd"/><text x="576.500" y="1059" text-anchor="middle" class="of">W</text>
    <circle cx="646" cy="1055" r="14" fill="#ed6c47"/><path d="M646 1041a14 14 0 0 1 14 14h-14z" fill="#ff8f6b"/><path d="M632 1055h28a14 14 0 0 1-28 0z" fill="#d35230"/><rect x="631" y="1047" width="15" height="15" rx="1" fill="#c43e1c"/><text x="638.500" y="1059" text-anchor="middle" class="of">P</text>
    <path d="M700 1041h11v7h-11z" fill="#21a366"/><path d="M711 1041h11v7h-11z" fill="#33c481"/><path d="M700 1048h22v7h-22z" fill="#21a366"/><path d="M700 1055h22v7h-22z" fill="#107c41"/><path d="M700 1062h22v7h-22z" fill="#185c37"/><rect x="693" y="1047" width="15" height="15" rx="1" fill="#107c41"/><text x="700.500" y="1059" text-anchor="middle" class="of">X</text>
    <path d="M311 1077h41v3h-41zM430 1077h61v3h-61zM497 1077h51v3h-51zM559 1077h41v3h-41zM621 1077h41v3h-41zM683 1077h41v3h-41z" fill="#0078d7"/><path d="M352 1077h10v3h-10zM600 1077h10v3h-10zM662 1077h10v3h-10zM724 1077h10v3h-10z" fill="#66abe2"/>
  </svg>
  <svg class="tray" width="175" height="50" viewBox="1585 1030 175 50">
    <path d="M1589.500 1059l7.500-8 7.500 8" fill="none" stroke="#111" stroke-width="1.400"/>
    <path d="M1621 1061q-4 0-4-4t5-5q2-5 7-4 5 1 5 5 3 1 3 4t-4 4z" fill="#888" stroke="#333"/><path d="M1619 1060l7-6 10 4q0 3-3 3h-12z" fill="#e4e4e4"/>
    <rect x="1652" y="1045" width="9" height="14" rx="1" fill="#000"/><path d="M1650.500 1053v5q0 3 6 3t6-3v-5M1656.500 1061v4M1653 1064.500h7" fill="none" stroke="#000"/>
    <path d="M1682 1050.500h14v9h-14v-4M1696 1053h2v4h-2" fill="none" stroke="#000"/><path d="M1682 1052h13v6h-13z"/><path d="M1677 1049h5v4h-5zM1679 1053v5h4M1678.500 1047v2M1681.500 1047v2" fill="none" stroke="#000"/>
    <g fill="none" stroke="#222" stroke-width="1.100"><path d="M1711 1062q0-13 14-13.500M1714 1062q1-10 11-10.500M1717 1062q1-7 8-7.500M1720 1062q0-4 5-4.500"/></g><circle cx="1724" cy="1061.500" r="1.800"/>
    <path d="M1737 1052.500h3l4-4v13l-4-4h-3zM1747 1052q2 3 0 6M1750 1050q3 5 0 10" fill="none" stroke="#111" stroke-width="1.200"/><path d="M1753 1048q5 7 0 14" fill="none" stroke="#aaa" stroke-width="1.200"/>
  </svg>
  <div class="clock">10:25 a. m.<br>17/10/2020</div>
  <svg class="notif" width="21" height="20"><path d="M0 0h20v16h-7l-3 4-3-4H0z"/><path d="M4 4.500h12M4 8h12M4 11.500h8" stroke="#fff" stroke-width="1.200"/></svg>
  <i class="peek"></i>
</div>
</div>
</body>
</html>
```
FILE: styles.css
```css
* { box-sizing: border-box; }
body { margin: 0; font-family: "Open Sans", "Noto Sans", sans-serif; font-size: 15px; color: #e6e8eb; overflow: hidden; }
svg { display: block; flex: none; }
.defs { position: absolute; }
.screen { width: 1920px; height: 1080px; padding: 3px 1px 0 2px; display: flex; flex-direction: column;
  background: linear-gradient(#fff 88px, #000 88px 231px, #f7f9fb 231px 836px, #000 836px 960px, #fff 960px) 0 0 / 2px 100% no-repeat, linear-gradient(90deg, #e4e8eb 500px, #fff 505px 660px, #e4e8eb 665px); }
.window { height: 1027px; background: #222932; border: 1px solid #0f8fce; display: flex; flex-direction: column; }

.titlebar { height: 34px; margin-bottom: 2px; display: flex; align-items: center; }
.logo { margin: 24px 0 0 12px; }
.qat { margin-left: 15px; }
.title { margin-left: 87px; width: 717px; padding-bottom: 1px; display: flex; white-space: nowrap; font-size: 14.500px; color: #eceef0; }
.t1 { width: 371.500px; letter-spacing: .06px; }
.t2 { letter-spacing: -.27px; }
.search { width: 223px; height: 26px; margin-left: 10px; padding-left: 2px; line-height: 25px; background: #464f61; color: #b5bac3; font-style: italic; font-size: 14px; letter-spacing: -.35px; white-space: nowrap; }
.acct { margin-left: 2px; }
.user { width: 100px; margin: 1px 0 0 3px; font-size: 14.500px; letter-spacing: -.1px; }
.qm { font: bold 15px "Open Sans", sans-serif; fill: #333b47; }

.tabs { height: 22px; padding-left: 58.500px; display: flex; align-items: stretch; }
.tab { padding: 0 12.400px; line-height: 22px; color: #a9aeb7; font-size: 14.500px; letter-spacing: -.16px; white-space: nowrap; }
.tab.on { background: #3b4453; color: #e8eaed; border-radius: 2px 2px 0 0; padding: 0 12px; }
.tab.ctx { background: #146a96; border: 1px solid #1590cd; color: #eef4f8; padding: 0; width: 106px; margin-left: 1px; text-align: center; line-height: 19px; height: 20px; }
.minrib { margin: 5px 0 0 28px; }

.ribbon { height: 122px; padding-left: 5px; display: flex; gap: 1px; }
.panel { background: #3b4453; display: flex; flex-direction: column; position: relative; }
.tools { height: 101px; display: grid; }
.panel h3 { margin: 0; height: 21px; line-height: 21px; font-size: 14.500px; font-weight: 400; letter-spacing: -.15px; display: flex; justify-content: center; align-items: center; gap: 8px; }
.big { width: 0; height: 0; border: 5px solid transparent; border-top: 6px solid #d5d8dc; border-bottom: 0; }
.p-bloque { width: 137px; } .p-bloque .tools { grid-template-columns: 55px 80px; }
.p-def { width: 297px; } .p-def .tools { grid-template-columns: 68px 70px 80px 72px; padding-left: 6px; }
.p-def h3 { letter-spacing: -.05px; }
.p-ref { width: 494px; } .p-ref .tools { grid-template-columns: 58px 68px 56px 1fr; padding-left: 1px; }
.p-ref h3 { padding-right: 17px; }
.p-imp { width: 419px; } .p-imp .tools { grid-template-columns: 89px 6px 249px 71px; }
.p-datos { width: 222px; } .p-datos .tools { grid-template-columns: 58px 1fr; padding-left: 1px; }
.p-vin { width: 220px; } .p-vin .tools { grid-template-columns: 70px 1fr; }
.p-ubi { width: 110px; } .p-ubi .tools { grid-template-columns: 93px; } .p-ubi h3 { padding-right: 18px; }
.tool { display: flex; flex-direction: column; align-items: center; position: relative; padding-top: 7px; }
.tool b { font-weight: 400; font-size: 14.500px; letter-spacing: -.2px; line-height: 20px; text-align: center; white-space: nowrap; margin-top: 4px; }
.tool.one b { margin-top: 3px; }
.ar { width: 0; height: 0; border: 3px solid transparent; border-top: 4px solid #ccd0d5; border-bottom: 0; }
.tool.one > .ar { margin-top: 3px; }
.ar.side { position: absolute; right: 5px; top: 73px; }
.p-def .ar.side { right: 2px; }
.p-ubi .tool .ar.side { position: absolute; right: 5px; top: 66px; }
.vsep { width: 1px; height: 92px; margin: 4px 0 0 5px; background: #222932; }
.list { list-style: none; margin: 4px 0 0; padding: 0 0 0 4px; }
.p-imp .list { padding-left: 12px; }
.p-vin .list { padding-left: 3px; }
.list li { height: 31px; display: flex; align-items: center; gap: 7px; white-space: nowrap; font-size: 14.500px; letter-spacing: -.13px; }
.list .param { letter-spacing: -.26px; margin-left: -1px; }
.p-vin .list li { gap: 6px; }
.p-ref .list .ar { margin-left: -4px; }
.p-ref .list li:last-child { letter-spacing: -.18px; }
.p-ref .list .far { margin-left: 0; }
.launch { position: absolute; right: 6px; bottom: 8px; }
.ix { font: italic 9px "Liberation Serif", serif; fill: #7fb6e8; }
.pdf { font: 13px "Liberation Sans", sans-serif; fill: #fff; }
.mini { font: 7.500px "Liberation Sans", sans-serif; fill: #ccc; }
.bigA { font: bold 20px "Liberation Sans", sans-serif; fill: #6cc0ff; }
.smA { font: bold 10px "Liberation Sans", sans-serif; fill: #6cc0ff; }

.files { height: 38px; padding: 6px 0 0 24px; display: flex; border-bottom: 5px solid #3b4453; }
.ftab { width: 161px; position: relative; display: flex; align-items: center; padding: 1px 0 0 19px; color: #c3c7cd; font-size: 14.500px; letter-spacing: -.15px; }
.ftab > svg:first-child { position: absolute; left: 0; top: 0; overflow: visible; }
.ftab > * { position: relative; }
.ftab.cur { width: 272px; padding-left: 12px; color: #e8eaed; letter-spacing: -.32px; }
.ftab .x { margin-left: 10px; }
.plus { margin: 5px 0 0 7px; }

.canvas { height: 768px; margin: 0 2px 0 3px; background: #8a8a8a; position: relative; }
.cmd { position: absolute; left: 382px; top: 734px; width: 1145px; height: 34px; display: flex; background: #454a55; border-radius: 3px 3px 0 0; }
.entry { flex: 1; margin: 1px 1px 2px 0; display: flex; align-items: center; padding: 0 5px; background: #dcdcdc; border-radius: 2px; }
.entry span { margin: 1px 0 0 6px; flex: 1; font: italic 15px "DejaVu Sans Mono", monospace; color: #7c7c7c; }
.dim text { font: bold 17px "Liberation Sans", sans-serif; fill: #000; text-anchor: middle; letter-spacing: -.5px; stroke: #000; stroke-width: .5px; }
.cl { font: bold 16px "Liberation Sans", sans-serif; fill: #00f; stroke: #00f; stroke-width: 1px; text-anchor: middle; }
.cap { font: bold 37px "Liberation Serif", serif; fill: #11f; stroke: #11f; stroke-width: .8px; white-space: pre; }
.esc { font: 15px "Liberation Sans", sans-serif; fill: #000; stroke: #000; stroke-width: .8px; }
.note { font: bold 6px "Liberation Sans", sans-serif; fill: #ff0; stroke: #ff0; stroke-width: .8px; }
.twod { font: bold 12px "Open Sans", sans-serif; fill: #7b8798; }

.status { height: 38px; display: flex; justify-content: space-between; padding: 1px 4px 0 15px; }
.layouts { display: flex; gap: 3px; font-size: 14.500px; }
.lt { width: 79px; height: 22px; line-height: 21px; padding-left: 6px; text-align: center; background: #2c3440; color: #a9aeb7; border-radius: 0 0 6px 6px; }
.lt.cur { width: 186px; padding: 0; background: #3b4453; color: #fff; font-size: 15px; font-weight: 700; letter-spacing: .5px; }
.layouts svg { margin-left: 1px; }
.papel { font: 14.500px "Open Sans", sans-serif; fill: #eceef0; }

.taskbar { height: 50px; margin-left: -2px; display: flex; align-items: center; color: #111;
  background: linear-gradient(90deg, #e9e9ef 80px, #cdeceb 150px, #c7eae7 400px, #d2edcf 490px, #daf0c3 700px, #d5efd0 890px, #ddf1c9 980px, #e9f2b5 1060px, #e7f2ba 1160px, #ccf0ee 1260px, #dfeaf3 1320px, #e9e9ee 1350px); }
.tray { margin-left: 845px; }
.clock { width: 97px; text-align: center; font-size: 14.500px; line-height: 24px; letter-spacing: -.2px; }
.notif { margin-left: 12px; }
.peek { width: 1px; height: 50px; margin-left: 24px; background: #c3c3c8; }
.of { font: bold 12px "Open Sans", sans-serif; fill: #fff; }
```
